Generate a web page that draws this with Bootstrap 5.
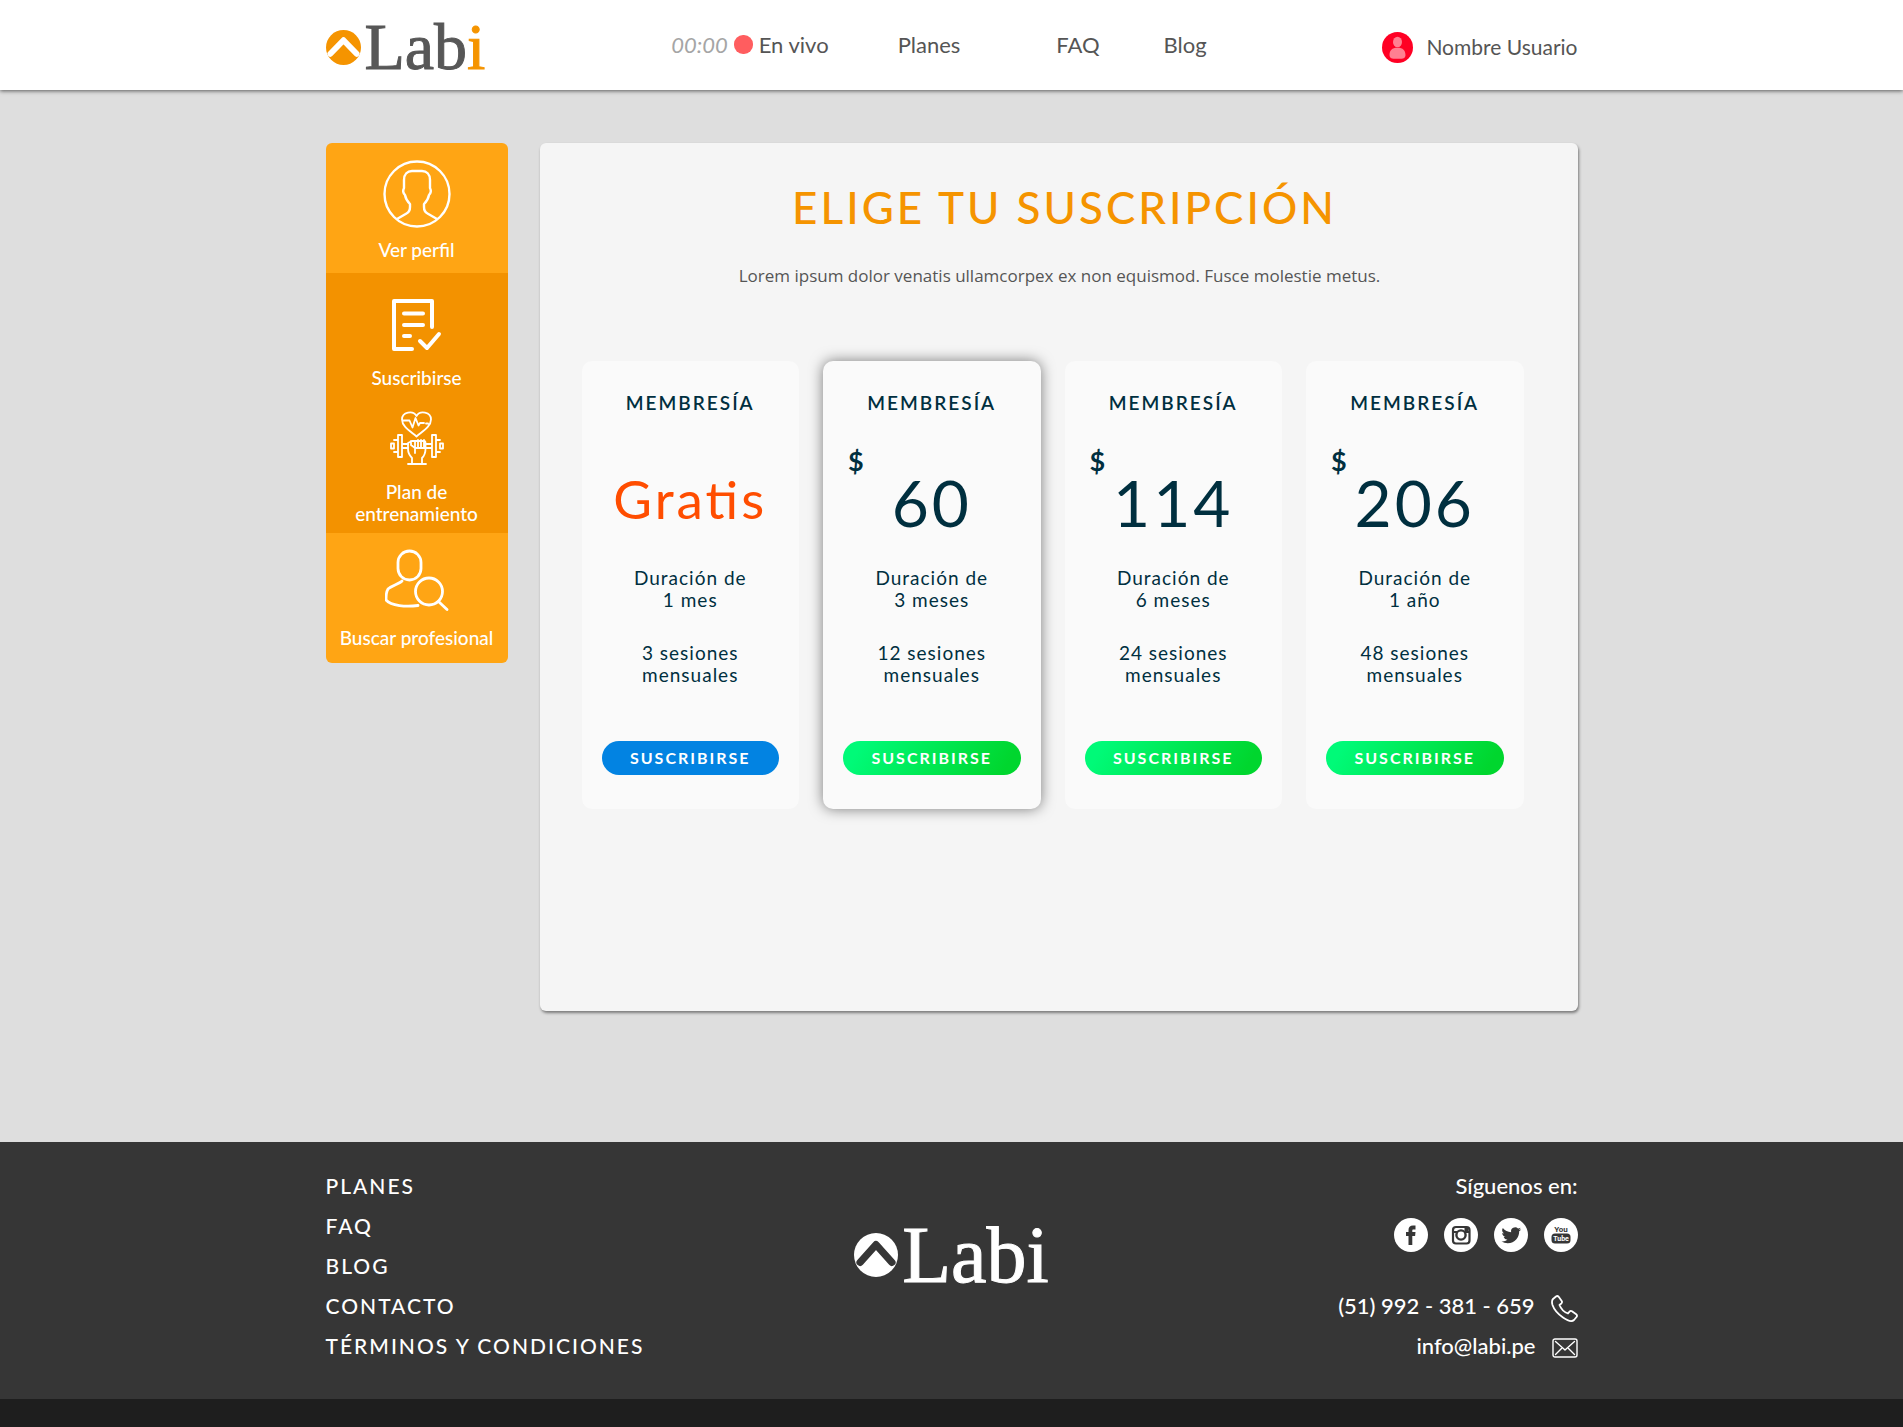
<!DOCTYPE html>
<html lang="es">
<head>
<meta charset="utf-8">
<meta name="viewport" content="width=device-width, initial-scale=1">
<title>Labi - Elige tu suscripción</title>
<link href="https://cdn.jsdelivr.net/npm/bootstrap@5.3.0/dist/css/bootstrap.min.css" rel="stylesheet">
<style>
  body { font-family: Lato, "Liberation Sans", sans-serif; background: #dedede; color: #555; font-size: 22px; }
  a { color: inherit; text-decoration: none; }
  .shell { width: 100%; max-width: 1252px; margin: 0 auto; }

  .topbar { min-height: 90px; background: #fff; box-shadow: 0 1px 4px rgba(0,0,0,.6); position: relative; }
  .brand { display: inline-flex; align-items: center; gap: 4px; font-family: "Liberation Serif", serif; line-height: 1; color: #575757; -webkit-text-stroke: 1px currentColor; }
  .brand-top { font-size: 66px; padding-top: 4px; }
  .brand-bottom { font-size: 80px; color: #fff; }
  .accent { color: #f59400; }
  .clock { color: #a5a5a5; font-style: italic; }
  .live-dot { width: 19px; height: 19px; border-radius: 9px; background: #ff5d5f; margin: 0 6px; }
  .nav-links { padding: 0 0 1px 10px; }
  .nav-links a { padding-left: 69px; }
  .nav-links a.wide { padding-left: 96px; }
  .nav-links a.short { padding-left: 64px; }
  .nav-links a.first { padding-left: 0; }
  .user { font-size: 21px; padding-top: 4px; gap: 13px; }

  .side { width: 182px; border-radius: 6px; overflow: hidden; background: #ffa514; color: #fff; font-size: 19px; font-weight: 500; line-height: 22px; }
  .side a { min-height: 130px; padding-bottom: 14px; gap: 16px; }
  .side a.loose { padding-bottom: 12px; gap: 11px; }
  .side a.tight { padding-bottom: 8px; }
  .side a.active { background: #f39200; }
  .side svg, .contact svg { fill: none; stroke: #fff; stroke-linecap: round; stroke-linejoin: round; }

  .panel { background: #f5f5f5; border-radius: 6px; box-shadow: 1px 2px 3px rgba(0,0,0,.45); min-height: 868px; padding: 38px 54px 60px 42px; }
  .panel h1 { font-size: 44px; line-height: 52px; letter-spacing: 3px; font-weight: 500; color: #f59400; margin-bottom: 31px; padding-left: 24px; }
  .intro { font-family: "Open Sans", "Noto Sans", sans-serif; font-size: 17px; line-height: 24px; margin-bottom: 73px; padding-left: 14px; }
  .plans { gap: 24px; }
  .plan { flex: 1 1 190px; min-height: 448px; background: #fafafa; border-radius: 10px; padding: 30px 20px 34px; color: #002f3f; font-size: 19px; line-height: 22px; letter-spacing: 1px; }
  .plan.featured { box-shadow: 0 0 14px rgba(0,0,0,.5); }
  .plan h2 { font-size: 19px; line-height: 24px; letter-spacing: 2px; font-weight: 600; margin-bottom: 30px; }
  .price { height: 94px; margin-bottom: 28px; }
  .currency { font-size: 27px; line-height: 32px; font-weight: 700; text-align: left; padding-left: 5px; margin-bottom: -10px; }
  .amount { font-size: 64px; line-height: 72px; letter-spacing: 3px; }
  .free { font-size: 53px; line-height: 64px; letter-spacing: 3px; color: #ff4d00; padding-top: 22px; font-feature-settings: "liga" 1; }
  .plan p { margin-bottom: 31px; }
  .btn-plan { border: 0; border-radius: 17px; height: 34px; padding: 0; font-size: 16px; line-height: 34px; letter-spacing: 2px; font-weight: 700; color: #fff; background: linear-gradient(120deg, #00fa78 10%, #00d62e 90%); }
  .btn-plan.basic { background: #0283e2; }
  .btn-plan:hover { color: #fff; }

  main { padding: 53px 0 131px; }
  footer { background: #363636; color: #fff; line-height: 40px; font-weight: 500; }
  .foot-body { padding: 24px 0 33px; }
  .foot-links { font-size: 21px; letter-spacing: 2px; }
  .foot-brand { padding-bottom: 22px; }
  .social { gap: 16px; padding: 12px 0 34px; line-height: 0; }
  .contact { gap: 16px; }
  .contact svg { margin-top: 4px; }
  .foot-end { background: #1e1e1e; height: 28px; }
  .foot-col { flex: 1 1 0; }
</style>
<script src="https://cdn.jsdelivr.net/npm/bootstrap@5.3.0/dist/js/bootstrap.bundle.min.js"></script>
</head>
<body>
<header class="topbar d-flex">
  <div class="shell d-flex flex-wrap align-items-center justify-content-between">
    <a class="brand brand-top" href="#">
      <svg width="35" height="35" viewBox="0 0 36 36"><circle cx="18" cy="18" r="18" fill="#f59400"/><path d="M4.500 24.500 18 10.500l13.500 14" fill="none" stroke="#fff" stroke-width="6" stroke-linecap="round" stroke-linejoin="round"/></svg>
      <span>Lab<span class="accent">i</span></span>
    </a>
    <nav class="nav-links d-flex flex-wrap align-items-center">
      <a class="first d-flex align-items-center" href="#"><span class="clock">00:00</span><span class="live-dot"></span>En vivo</a>
      <a href="#">Planes</a>
      <a class="wide" href="#">FAQ</a>
      <a class="short" href="#">Blog</a>
    </nav>
    <a class="user d-flex align-items-center" href="#">
      <svg width="31" height="31" viewBox="0 0 31 31"><circle cx="15.500" cy="15.500" r="15.500" fill="#ff0024"/><ellipse cx="15.500" cy="10" rx="4.500" ry="5.300" fill="#ff8091"/><path d="M15.500 15.800c5.500 0 8 2.500 8 7.500 0 2.500-2 3.500-4 3.500h-8c-2 0-4-1-4-3.500 0-5 2.500-7.500 8-7.500z" fill="#ff8091"/></svg>
      Nombre Usuario
    </a>
  </div>
</header>

<main>
  <div class="shell d-flex flex-wrap flex-lg-nowrap align-items-start">
    <nav class="side flex-shrink-0 me-lg-4 text-center mb-4">
      <a class="loose d-flex flex-column align-items-center justify-content-end" href="#">
        <svg width="68" height="68" viewBox="0 0 68 68" stroke-width="2.400"><circle cx="34" cy="34" r="32.500"/><path d="M14 59l9.500-5.500c3-1.500 3.500-4 3.500-6.500v-3c-3-3-4.500-6-5-9-2-2-2-5-1-7V20c0-6 3.500-9 8-9h10c4.500 0 8 3 8 9v8c1 2 1 5-1 7-.5 3-2 6-5 9v3c0 2.500.5 5 3.500 6.500L54 59"/></svg>
        Ver perfil
      </a>
      <a class="active d-flex flex-column align-items-center justify-content-end" href="#">
        <svg width="52" height="52" viewBox="0 0 52 52" stroke-width="4"><path d="M21 50H3V2h38v26"/><path d="M13 14.500h19M13 26h19M13 37h6M29 42l7 7 12-14"/></svg>
        Suscribirse
      </a>
      <a class="active tight d-flex flex-column align-items-center justify-content-end" href="#">
        <svg width="54" height="54" viewBox="0 0 54 54" stroke-width="1.800"><path d="M26.500 25.500C20 20 12 15.500 12 8.500 12 1 23 -1 26.500 5 30-1 41 1 41 8.500c0 7-8 11.500-14.500 17zM13 9.500h6.500l3 7 3-9.500 3 7.500 1.500-2.500h4M36 12.500h2"/><path d="M1 32.500h3v5H1zM4 29h4v12H4M8 24h4v22H8zM12 33h6M12 37h6M53 32.500h-3v5h3zM50 29h-4v12h4M46 24h-4v22h4zM42 33h-7M42 37h-7"/><path d="M18 53h18M22 53v-6c-3-3-4-6-4-9v-6l4-2h12c1 0 1.500 1 1.500 2v6c0 3-.5 6-3.500 9v6M21 30v4l4 3v5M25 30v7h3v-8M28 37h3v-8M31 37h3v-8"/></svg>
        <span>Plan de<br>entrenamiento</span>
      </a>
      <a class="d-flex flex-column align-items-center justify-content-end" href="#">
        <svg width="64" height="62" viewBox="0 0 64 62" stroke-width="2.800"><rect x="13" y="2" width="23" height="29" rx="11.500"/><path d="M17 32c-3 3-11 5-14 8-2 3-2 6-2 11 5 6 20 7 32 5.500"/><circle cx="44" cy="42.500" r="13.500"/><path d="M53.500 52.500 62 60.500"/></svg>
        Buscar profesional
      </a>
    </nav>

    <section class="panel flex-grow-1 text-center ms-lg-2">
      <h1>ELIGE TU SUSCRIPCIÓN</h1>
      <p class="intro">Lorem ipsum dolor venatis ullamcorpex ex non equismod. Fusce molestie metus.</p>
      <div class="plans d-flex flex-wrap flex-xl-nowrap">
        <article class="plan d-flex flex-column">
          <h2>MEMBRESÍA</h2>
          <div class="price"><div class="free">Gratis</div></div>
          <p>Duración de<br>1 mes</p>
          <p>3 sesiones<br>mensuales</p>
          <button type="button" class="btn btn-plan basic w-100 mt-auto">SUSCRIBIRSE</button>
        </article>
        <article class="plan featured d-flex flex-column">
          <h2>MEMBRESÍA</h2>
          <div class="price"><div class="currency">$</div><div class="amount">60</div></div>
          <p>Duración de<br>3 meses</p>
          <p>12 sesiones<br>mensuales</p>
          <button type="button" class="btn btn-plan w-100 mt-auto">SUSCRIBIRSE</button>
        </article>
        <article class="plan d-flex flex-column">
          <h2>MEMBRESÍA</h2>
          <div class="price"><div class="currency">$</div><div class="amount">114</div></div>
          <p>Duración de<br>6 meses</p>
          <p>24 sesiones<br>mensuales</p>
          <button type="button" class="btn btn-plan w-100 mt-auto">SUSCRIBIRSE</button>
        </article>
        <article class="plan d-flex flex-column">
          <h2>MEMBRESÍA</h2>
          <div class="price"><div class="currency">$</div><div class="amount">206</div></div>
          <p>Duración de<br>1 año</p>
          <p>48 sesiones<br>mensuales</p>
          <button type="button" class="btn btn-plan w-100 mt-auto">SUSCRIBIRSE</button>
        </article>
      </div>
    </section>
  </div>
</main>

<footer>
  <div class="shell foot-body d-flex flex-wrap">
    <ul class="foot-links foot-col list-unstyled mb-0 text-nowrap">
      <li><a href="#">PLANES</a></li>
      <li><a href="#">FAQ</a></li>
      <li><a href="#">BLOG</a></li>
      <li><a href="#">CONTACTO</a></li>
      <li><a href="#">TÉRMINOS Y CONDICIONES</a></li>
    </ul>
    <div class="foot-brand d-flex align-items-center">
      <a class="brand brand-bottom fw-normal" href="#">
        <svg width="44" height="44" viewBox="0 0 36 36"><circle cx="18" cy="18" r="18" fill="#fff"/><path d="M5 24 18 9.500l13 14.500" fill="none" stroke="#363636" stroke-width="6" stroke-linecap="round" stroke-linejoin="round"/></svg>
        <span>Labi</span>
      </a>
    </div>
    <div class="foot-col text-end text-nowrap">
      <div>Síguenos en:</div>
      <div class="social d-flex justify-content-end">
        <a href="#" aria-label="Facebook"><svg width="34" height="34" viewBox="0 0 34 34"><circle cx="17" cy="17" r="17" fill="#fff"/><path d="M14.500 27V18H12v-4h2.500v-2c0-3 1.500-4.500 4.500-4.500h2.500v4h-2c-1 0-1.200.5-1.200 1.300V14h3.200l-.4 4h-2.800v9z" fill="#363636"/></svg></a>
        <a href="#" aria-label="Instagram"><svg width="34" height="34" viewBox="0 0 34 34"><circle cx="17" cy="17" r="17" fill="#fff"/><rect x="9" y="9" width="16.500" height="16.500" rx="3" fill="none" stroke="#363636" stroke-width="2.200"/><path d="M9 14h5M20 14h5" stroke="#363636" stroke-width="1.800"/><circle cx="17" cy="17" r="4.600" fill="#fff" stroke="#363636" stroke-width="2.400"/><rect x="20.500" y="9.500" width="4" height="4" rx=".5" fill="#363636"/></svg></a>
        <a href="#" aria-label="Twitter"><svg width="34" height="34" viewBox="0 0 34 34"><circle cx="17" cy="17" r="17" fill="#fff"/><path transform="translate(7.500 7.500) scale(.82)" d="M23.950 4.570a10 10 0 0 1-2.820.77 4.960 4.960 0 0 0 2.160-2.720c-.95.550-2 .95-3.130 1.180a4.920 4.920 0 0 0-8.380 4.480C7.690 8.090 4.070 6.130 1.640 3.160a4.920 4.920 0 0 0 1.520 6.570 4.900 4.900 0 0 1-2.230-.61v.06c0 2.380 1.690 4.370 3.950 4.820a5 5 0 0 1-2.210.09 4.940 4.940 0 0 0 4.600 3.420A9.870 9.870 0 0 1 0 19.540a14 14 0 0 0 7.550 2.210c9.050 0 14-7.500 14-13.980l-.02-.64a9.930 9.930 0 0 0 2.420-2.560z" fill="#363636"/></svg></a>
        <a href="#" aria-label="YouTube"><svg width="34" height="34" viewBox="0 0 34 34" font-family="Roboto, sans-serif" font-weight="700" font-size="8" text-anchor="middle"><circle cx="17" cy="17" r="17" fill="#fff"/><rect x="7.500" y="15.500" width="19" height="10" rx="3.500" fill="#363636"/><text x="17" y="13.500" fill="#363636">You</text><text x="17" y="23.300" fill="#fff" font-size="7">Tube</text></svg></a>
      </div>
      <div class="contact d-flex justify-content-end align-items-center"><a href="#">(51) 992 - 381 - 659</a>
        <svg width="27" height="27" viewBox="0 0 27 27" stroke-width="1.800"><path d="M2 4 5 1.500c1-.8 2-.5 2.700.3l3 4.200c.6 1 .4 1.800-.4 2.500L8.500 10c1.500 4 4.500 7 8.500 8.500l1.500-1.800c.7-.8 1.600-1 2.500-.4l4.200 3c.9.7 1 1.700.3 2.700L23 25c-2 1.800-6 1-11-2.500S3 14.500 1.500 10C.8 7.500.8 5.200 2 4z"/></svg></div>
      <div class="contact d-flex justify-content-end align-items-center"><a href="#">info@labi.pe</a>
        <svg width="26" height="20" viewBox="0 0 26 20" stroke-width="1.400"><rect x="1" y="1" width="24" height="18" rx="2"/><path d="M3.500 3.500 13 12l9.500-8.500M3.500 16.500l6-6M22.500 16.500l-6-6"/></svg></div>
    </div>
  </div>
  <div class="foot-end"></div>
</footer>
</body>
</html>
